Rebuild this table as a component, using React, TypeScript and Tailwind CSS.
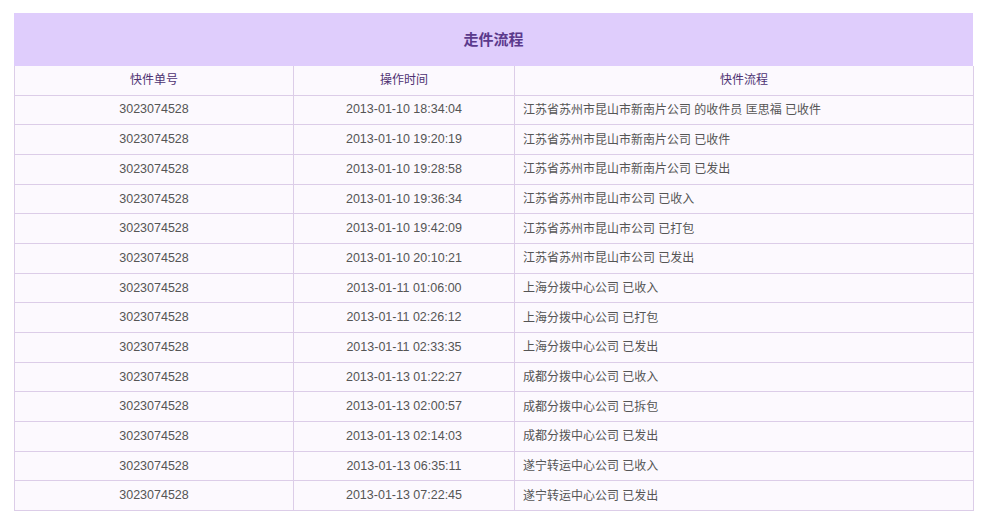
const rows: [string, string][] = [
  ["2013-01-10 18:34:04", "江苏省苏州市昆山市新南片公司 的收件员 匡思福 已收件"],
  ["2013-01-10 19:20:19", "江苏省苏州市昆山市新南片公司 已收件"],
  ["2013-01-10 19:28:58", "江苏省苏州市昆山市新南片公司 已发出"],
  ["2013-01-10 19:36:34", "江苏省苏州市昆山市公司 已收入"],
  ["2013-01-10 19:42:09", "江苏省苏州市昆山市公司 已打包"],
  ["2013-01-10 20:10:21", "江苏省苏州市昆山市公司 已发出"],
  ["2013-01-11 01:06:00", "上海分拨中心公司 已收入"],
  ["2013-01-11 02:26:12", "上海分拨中心公司 已打包"],
  ["2013-01-11 02:33:35", "上海分拨中心公司 已发出"],
  ["2013-01-13 01:22:27", "成都分拨中心公司 已收入"],
  ["2013-01-13 02:00:57", "成都分拨中心公司 已拆包"],
  ["2013-01-13 02:14:03", "成都分拨中心公司 已发出"],
  ["2013-01-13 06:35:11", "遂宁转运中心公司 已收入"],
  ["2013-01-13 07:22:45", "遂宁转运中心公司 已发出"],
];

const font = { fontFamily: '"Liberation Sans", Arial, "Noto Sans CJK SC", sans-serif' };

export default function App() {
  return (
    <div className="bg-white w-[987px] h-[526px] pt-[13px] pl-[14px]" style={font}>
      <div className="w-[959px]">
        <div className="h-[53px] pt-px bg-[#dfcdfc] flex items-center justify-center text-[15px] font-bold text-[#5b3a8c]">
          走件流程
        </div>
        <table className="w-[960px] table-fixed border-collapse bg-[#fcf9fe] text-[12px]">
          <colgroup>
            <col className="w-[279px]" />
            <col className="w-[221px]" />
            <col />
          </colgroup>
          <thead>
            <tr className="h-[29px] text-[#4e3272]">
              <th className="font-normal border border-[#dccde8] border-t-0 text-center">快件单号</th>
              <th className="font-normal border border-[#dccde8] border-t-0 text-center">操作时间</th>
              <th className="font-normal border border-[#dccde8] border-t-0 text-center">快件流程</th>
            </tr>
          </thead>
          <tbody className="text-[#555555]">
            {rows.map(([time, desc], i) => (
              <tr key={i} className="h-[29.7px]">
                <td className="border border-[#dccde8] text-center text-[12.5px]">3023074528</td>
                <td className="border border-[#dccde8] text-center text-[12.5px]">{time}</td>
                <td className="border border-[#dccde8] text-left pl-[8px]">{desc}</td>
              </tr>
            ))}
          </tbody>
        </table>
      </div>
    </div>
  );
}
